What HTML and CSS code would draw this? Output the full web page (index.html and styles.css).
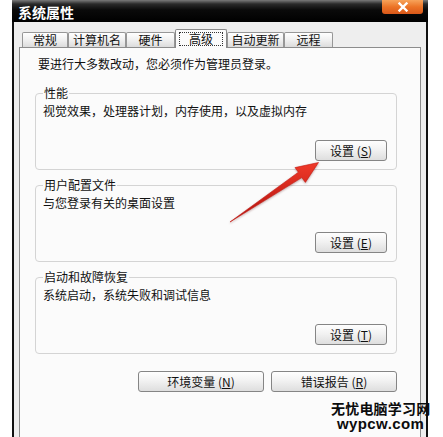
FILE: index.html
```html
<!DOCTYPE html>
<html lang="zh-CN">
  <head>
    <meta charset="utf-8">
    <title>系统属性</title>
    <link rel="stylesheet" href="styles.css">
  </head>
  <body>
    <div class="window">
      <div class="titlebar">
        <span class="title">系统属性</span>
        <span class="close">
          <svg width="12" height="10" viewBox="0 0 12 10">
            <path d="M2.5 1.5 L9.5 8.5 M9.5 1.5 L2.5 8.5" stroke="#fff" stroke-width="2.4" stroke-linecap="square"/>
          </svg>
        </span>
      </div>
      <div class="frame">
        <ul class="tabs">
          <li class="tab tab-1">常规</li>
          <li class="tab tab-2">计算机名</li>
          <li class="tab tab-3">硬件</li>
          <li class="tab tab-4 active"><span class="focus">高级</span></li>
          <li class="tab tab-5">自动更新</li>
          <li class="tab tab-6">远程</li>
        </ul>
        <div class="panel">
          <p class="note">要进行大多数改动，您必须作为管理员登录。</p>

          <fieldset class="group">
            <legend>性能</legend>
            <p class="desc">视觉效果，处理器计划，内存使用，以及虚拟内存</p>
            <div class="row">
              <button class="btn">设置 (<u>S</u>)</button>
            </div>
          </fieldset>

          <fieldset class="group">
            <legend>用户配置文件</legend>
            <p class="desc">与您登录有关的桌面设置</p>
            <div class="row">
              <button class="btn">设置 (<u>E</u>)</button>
            </div>
          </fieldset>

          <fieldset class="group">
            <legend>启动和故障恢复</legend>
            <p class="desc">系统启动，系统失败和调试信息</p>
            <div class="row">
              <button class="btn">设置 (<u>T</u>)</button>
            </div>
          </fieldset>

          <div class="footer">
            <button class="btn btn-wide">环境变量 (<u>N</u>)</button>
            <button class="btn btn-wide">错误报告 (<u>R</u>)</button>
          </div>
        </div>
      </div>
    </div>

    <!-- red pointer drawn over the dialog -->
    <svg class="arrow" width="443" height="437" viewBox="0 0 443 437">
      <defs>
        <linearGradient id="red" x1="0" y1="0" x2="0" y2="1">
          <stop offset="0" stop-color="#f03a2a"/>
          <stop offset="1" stop-color="#b0100c"/>
        </linearGradient>
      </defs>
      <polygon points="230,222 298.4,172.2 295,167.6 318.5,162.5 305.4,182.4 301.8,177.6" fill="url(#red)" stroke="#c41a12" stroke-width="0.6" stroke-linejoin="round"/>
    </svg>

    <div class="watermark">
      <div class="wm-cn">无忧电脑学习网</div>
      <div class="wm-en">wypcw.com</div>
    </div>
  </body>
</html>
```

FILE: styles.css
```css
body {
  margin: 0;
  background: #fff;
  height: 437px;
  overflow: hidden;
  font-family: "Noto Sans CJK SC", "Liberation Sans", sans-serif;
  font-size: 12px;
  color: #111;
}

.window {
  margin-left: 12px;
  width: 416px;
}

.titlebar {
  height: 22px;
  display: flex;
  align-items: center;
  background: linear-gradient(#7a7a7a 0px, #2a2a2a 4px, #0a0a0a 10px, #000 22px);
}
.title {
  padding-left: 6px;
  color: #fff;
  font-weight: bold;
  font-size: 14px;
  line-height: 16px;
  margin-top: 1px;
}
.close {
  margin-left: auto;
  margin-right: 5px;
  align-self: flex-start;
  width: 41px;
  height: 14px;
  display: flex;
  align-items: center;
  justify-content: center;
  border-radius: 0 0 3px 3px;
  background: linear-gradient(#f7a35a, #ec7326 50%, #d9581a);
}

.frame {
  height: 415px;
  overflow: hidden;
  border-left: 2px solid #111;
  border-right: 2px solid #111;
  background: #eeeeee;
  padding: 7px 5px 0 5px;
}

/* tabs */
.tabs {
  list-style: none;
  margin: 0;
  padding: 0 0 0 3px;
  height: 18px;
  display: flex;
  align-items: flex-end;
}
.tab {
  height: 14px;
  line-height: 14px;
  text-align: center;
  border: 1px solid #979797;
  border-bottom: none;
  border-radius: 2px 2px 0 0;
  background: linear-gradient(#ffffff, #f0f0f0 50%, #dcdcdc);
  box-sizing: content-box;
}
.tab-1 { width: 44px; }
.tab-2 { width: 56px; }
.tab-3 { width: 47px; }
.tab-4 { width: 50px; }
.tab-5 { width: 55px; }
.tab-6 { width: 47px; }
.tab.active {
  height: 18px;
  margin-bottom: -1px;
  position: relative;
  z-index: 1;
  background: #fbfbfb;
  border-color: #8a8a8a;
}
.focus {
  display: inline-block;
  margin-top: 2px;
  padding: 0 9px;
  line-height: 12px;
  border: 1px dotted #333;
}

/* panel */
.panel {
  height: 420px;
  border: 1px solid #8c8c8c;
  background: #fbfbfb;
  padding: 0 23px 0 15px;
}
.note {
  margin: 8px 0 0 3px;
  line-height: 16px;
}

.group {
  margin: 8px 0 0 0;
  padding: 0 9px 8px 7px;
  border: 1px solid #d4d4d4;
  border-radius: 4px;
}
.note + .group {
  margin-top: 14px;
}
.group legend {
  padding: 0 1px;
  line-height: 14px;
  color: #111;
}
.desc {
  margin: 3px 0 0 0;
  line-height: 16px;
}
.row {
  display: flex;
  justify-content: flex-end;
  margin-top: 21px;
}

.btn {
  width: 72px;
  height: 21px;
  padding: 0;
  font-family: "Noto Sans CJK SC", "Liberation Sans", sans-serif;
  font-size: 12px;
  line-height: 19px;
  color: #111;
  border: 1px solid #858585;
  border-radius: 3px;
  background: linear-gradient(#fefefe, #f2f2f2 45%, #dedede);
}
.btn u {
  text-underline-offset: 1px;
}
.btn-wide {
  width: 126px;
}

.footer {
  display: flex;
  justify-content: flex-end;
  gap: 7px;
  margin-top: 17px;
}

/* overlays */
.arrow {
  position: absolute;
  left: 0;
  top: 0;
  pointer-events: none;
  filter: drop-shadow(0 1px 1px rgba(80, 0, 0, 0.35));
}

.watermark {
  position: absolute;
  left: 331px;
  top: 400px;
  color: #0c0c0c;
  font-weight: bold;
}
.wm-cn {
  font-size: 14px;
  line-height: 16px;
  letter-spacing: 0.2px;
}
.wm-en {
  font-family: "Liberation Sans", sans-serif;
  font-size: 15px;
  line-height: 15px;
  letter-spacing: 0.4px;
  padding-left: 6px;
}
```
